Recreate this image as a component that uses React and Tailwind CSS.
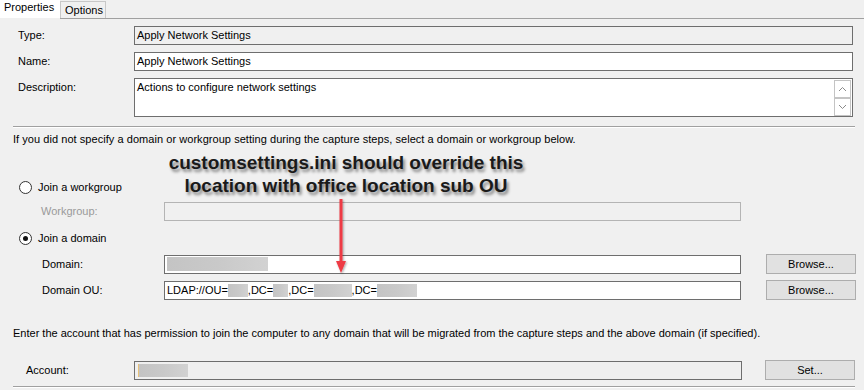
import React from 'react';

const Blur = ({ w, h = 14, className = '' }) => (
  <span
    className={`inline-block align-middle bg-gradient-to-r from-[#c4c4c4] via-[#c9c9c9] to-[#d2d2d2] ${className}`}
    style={{ width: w, height: h }}
  />
);

const Radio = ({ checked, label }) => (
  <div className="flex items-center h-[15px] pl-[19px]">
    <span className="w-[13px] h-[13px] rounded-full border border-[#333] bg-white flex items-center justify-center">
      {checked && <span className="w-[5px] h-[5px] rounded-full bg-[#111]" />}
    </span>
    <span className="ml-[6px]">{label}</span>
  </div>
);

const Button = ({ children }) => (
  <button className="w-[90px] h-[20px] bg-[#e1e1e1] border border-[#adadad] text-[11px] text-black flex items-center justify-center">
    {children}
  </button>
);

const Chevron = ({ up }) => (
  <svg width="9" height="6" viewBox="0 0 9 6" className="block">
    <path
      d={up ? 'M1 5 L4.5 1.5 L8 5' : 'M1 1 L4.5 4.5 L8 1'}
      fill="none"
      stroke="#8a8a8a"
      strokeWidth="1"
    />
  </svg>
);

export default function App() {
  return (
    <div className="relative w-[864px] h-[390px] overflow-hidden bg-[#f0f0f0] text-[11px] leading-[13px] text-black font-['Liberation_Sans',Arial,sans-serif]">
      {/* tabs */}
      <div className="flex items-end h-[18px]">
        <div className="w-[60px] h-[18px] bg-white pl-[4px] pt-[1px]">Properties</div>
        <div className="w-[46px] h-[17px] border border-b-0 border-[#c8c8c8] bg-[#f0f0f0] pl-[4px] pt-[2px]">Options</div>
      </div>
      <div className="border-t border-[#a0a0a0] ml-[60px]" />

      {/* general */}
      <div className="flex flex-col gap-[7px] mt-[7px]">
        <div className="flex items-start">
          <div className="w-[134px] pl-[18px] pt-[3px]">Type:</div>
          <div className="w-[719px] h-[19px] border border-[#6e6e6e] bg-[#f0f0f0] pl-[2px] pt-[2px]">Apply Network Settings</div>
        </div>
        <div className="flex items-start">
          <div className="w-[134px] pl-[18px] pt-[3px]">Name:</div>
          <div className="w-[719px] h-[19px] border border-[#6e6e6e] bg-white pl-[2px] pt-[2px]">Apply Network Settings</div>
        </div>
        <div className="flex items-start">
          <div className="w-[134px] pl-[18px] pt-[3px]">Description:</div>
          <div className="w-[719px] h-[39px] border border-[#6e6e6e] bg-white pl-[2px] pt-[2px] flex justify-between">
            <span>Actions to configure network settings</span>
            <div className="flex flex-col mr-[1px] mt-[-1px]">
              <div className="w-[17px] h-[18px] border border-[#c4c4c4] flex items-center justify-center">
                <Chevron up />
              </div>
              <div className="w-[17px] h-[18px] border border-[#c4c4c4] flex items-center justify-center">
                <Chevron />
              </div>
            </div>
          </div>
        </div>
      </div>

      <div className="ml-[13px] w-[842px] mt-[9px] border-t border-[#a0a0a0] border-b border-b-white" />

      <div className="ml-[13px] mt-[5px] tracking-[0.05px]">
        If you did not specify a domain or workgroup setting during the capture steps, select a domain or workgroup below.
      </div>

      {/* domain / workgroup */}
      <div className="mt-[34px]">
        <Radio label="Join a workgroup" />
      </div>
      <div className="flex items-center mt-[7px]">
        <div className="w-[164px] pl-[41px] text-[#9a9a9a]">Workgroup:</div>
        <div className="w-[577px] h-[19px] border border-[#b4b4b4] bg-[#f0f0f0]" />
      </div>
      <div className="mt-[10px]">
        <Radio checked label="Join a domain" />
      </div>
      <div className="flex items-center mt-[8px]">
        <div className="w-[164px] pl-[42px]">Domain:</div>
        <div className="w-[577px] h-[19px] border border-[#6e6e6e] bg-white pl-[2px] flex items-center">
          <Blur w={101} />
        </div>
        <div className="ml-[25px]">
          <Button>Browse...</Button>
        </div>
      </div>
      <div className="flex items-center mt-[6px]">
        <div className="w-[164px] pl-[42px]">Domain OU:</div>
        <div className="w-[577px] h-[19px] border border-[#6e6e6e] bg-white pl-[2px] flex items-center">
          <span>LDAP://OU=</span>
          <Blur w={20} h={13} />
          <span>,DC=</span>
          <Blur w={15} h={13} />
          <span>,DC=</span>
          <Blur w={38} h={13} />
          <span>,DC=</span>
          <Blur w={40} h={13} />
        </div>
        <div className="ml-[25px]">
          <Button>Browse...</Button>
        </div>
      </div>

      <div className="ml-[13px] mt-[27px]">
        Enter the account that has permission to join the computer to any domain that will be migrated from the capture steps and the above domain (if specified).
      </div>

      <div className="flex items-center mt-[20px]">
        <div className="w-[134px] pl-[26px]">Account:</div>
        <div className="w-[608px] h-[19px] border border-[#6e6e6e] bg-[#f0f0f0] pl-[3px] flex items-center">
          <span className="w-[1px] h-[13px] bg-[#e8c27a]" />
          <Blur w={49} h={13} />
        </div>
        <div className="ml-[23px]">
          <Button>Set...</Button>
        </div>
      </div>
      <div className="ml-[13px] w-[842px] mt-[6px] border-t border-[#a0a0a0] border-b border-b-white" />

      {/* annotation overlay */}
      <div className="absolute left-[146px] top-[151px] w-[400px] text-center font-bold text-[19px] leading-[23px] text-[#1a1a1a] [text-shadow:2px_3px_3px_rgba(0,0,0,0.45)]">
        customsettings.ini should override this
        <br />
        location with office location sub OU
      </div>
      <svg className="absolute left-[333px] top-[197px]" width="18" height="80" viewBox="0 0 18 80">
        <defs>
          <filter id="sh" x="-50%" y="-20%" width="200%" height="140%">
            <feDropShadow dx="1" dy="1" stdDeviation="1" floodColor="#000" floodOpacity="0.35" />
          </filter>
        </defs>
        <g filter="url(#sh)">
          <rect x="6.5" y="2" width="3" height="64" fill="#ee3b45" />
          <path d="M3 64 L13 64 L8 76 Z" fill="#ee3b45" />
        </g>
      </svg>
    </div>
  );
}
